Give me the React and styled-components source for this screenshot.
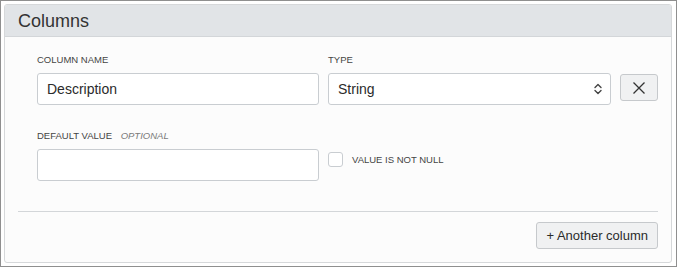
import React from "react";
import styled, { createGlobalStyle } from "styled-components";

const GlobalStyle = createGlobalStyle`
  html, body {
    margin: 0;
    padding: 0;
    background: #ffffff;
  }
  body {
    font-family: "Liberation Sans", Arial, sans-serif;
    color: #333;
  }
`;

function App() {
  return (
    <>
      <GlobalStyle />
      <Frame>
        <Panel>
          <PanelHeader>Columns</PanelHeader>
          <PanelBody>
            <Fields>
              <Field>
                <Label>Column name</Label>
                <TextInput defaultValue="Description" />
              </Field>
              <Field>
                <Label>Type</Label>
                <SelectBox>
                  <span>String</span>
                  <svg width="8" height="12" viewBox="0 0 8 12" fill="none">
                    <path d="M1 4.5 L4 1.5 L7 4.5" stroke="#444" strokeWidth="1.4" strokeLinecap="round" strokeLinejoin="round" />
                    <path d="M1 7.5 L4 10.5 L7 7.5" stroke="#444" strokeWidth="1.4" strokeLinecap="round" strokeLinejoin="round" />
                  </svg>
                </SelectBox>
              </Field>
              <RemoveButton aria-label="Remove column">
                <svg width="14" height="14" viewBox="0 0 14 14">
                  <path d="M1.5 1.5 L12.5 12.5 M12.5 1.5 L1.5 12.5" stroke="#333" strokeWidth="1.3" />
                </svg>
              </RemoveButton>

              <Field>
                <Label>
                  Default value <Optional>Optional</Optional>
                </Label>
                <TextInput />
              </Field>
              <CheckRow>
                <CheckBox />
                <CheckLabel>Value is not null</CheckLabel>
              </CheckRow>
            </Fields>
            <Divider />
            <Footer>
              <AddButton>+ Another column</AddButton>
            </Footer>
          </PanelBody>
        </Panel>
      </Frame>
    </>
  );
}

export default App;

const Frame = styled.div`
  width: 677px;
  height: 267px;
  box-sizing: border-box;
  border: 1px solid #8f8f8f;
  padding: 3px 4px 3px 3px;
  background: #ffffff;
`;

const Panel = styled.div`
  height: 100%;
  box-sizing: border-box;
  border: 1px solid #d6d8da;
  border-radius: 3px;
  background: #fcfcfc;
  overflow: hidden;
  display: flex;
  flex-direction: column;
`;

const PanelHeader = styled.div`
  height: 32px;
  box-sizing: border-box;
  padding: 5px 13px 0;
  background: #e1e4e7;
  border-bottom: 1px solid #d3d6d9;
  font-size: 18px;
  line-height: 22px;
  color: #333;
`;

const PanelBody = styled.div`
  flex: 1;
  padding: 17px 13px 0 13px;
  display: flex;
  flex-direction: column;
`;

const Fields = styled.div`
  display: grid;
  grid-template-columns: 282px 283px 38px;
  column-gap: 9px;
  row-gap: 25px;
  padding-left: 19px;
  align-items: start;
`;

const Field = styled.div`
  display: flex;
  flex-direction: column;
`;

const Label = styled.div`
  font-size: 9.5px;
  line-height: 11px;
  height: 11px;
  margin-bottom: 8px;
  text-transform: uppercase;
  color: #444;
  white-space: nowrap;
`;

const Optional = styled.span`
  margin-left: 6px;
  font-style: italic;
  color: #7a7a7a;
`;

const TextInput = styled.input`
  height: 32px;
  box-sizing: border-box;
  border: 1px solid #c9cdd1;
  border-radius: 3px;
  background: #ffffff;
  padding: 0 9px;
  font-family: "Liberation Sans", Arial, sans-serif;
  font-size: 14px;
  color: #2b2b2b;
  outline: none;
`;

const SelectBox = styled.div`
  height: 32px;
  box-sizing: border-box;
  border: 1px solid #c9cdd1;
  border-radius: 3px;
  background: #ffffff;
  padding: 0 8px 0 9px;
  display: flex;
  align-items: center;
  justify-content: space-between;
  font-size: 14px;
  color: #2b2b2b;
`;

const RemoveButton = styled.button`
  margin-top: 20px;
  width: 38px;
  height: 27px;
  box-sizing: border-box;
  border: 1px solid #c6c9cc;
  border-radius: 3px;
  background: #f0f1f2;
  display: flex;
  align-items: center;
  justify-content: center;
  padding: 0;
`;

const CheckRow = styled.div`
  grid-column: 2 / 4;
  margin-top: 22px;
  display: flex;
  align-items: center;
  gap: 9px;
`;

const CheckBox = styled.span`
  width: 15px;
  height: 15px;
  box-sizing: border-box;
  border: 1px solid #c9cdd1;
  border-radius: 3px;
  background: #ffffff;
`;

const CheckLabel = styled.span`
  font-size: 9.5px;
  text-transform: uppercase;
  color: #444;
`;

const Divider = styled.div`
  margin-top: 30px;
  height: 1px;
  background: #d3d6d9;
`;

const Footer = styled.div`
  display: flex;
  justify-content: flex-end;
  padding-top: 10px;
`;

const AddButton = styled.button`
  height: 27px;
  box-sizing: border-box;
  padding: 0 9px;
  border: 1px solid #c6c9cc;
  border-radius: 3px;
  background: #f0f1f2;
  font-family: "Liberation Sans", Arial, sans-serif;
  font-size: 13px;
  color: #2b2b2b;
`;
